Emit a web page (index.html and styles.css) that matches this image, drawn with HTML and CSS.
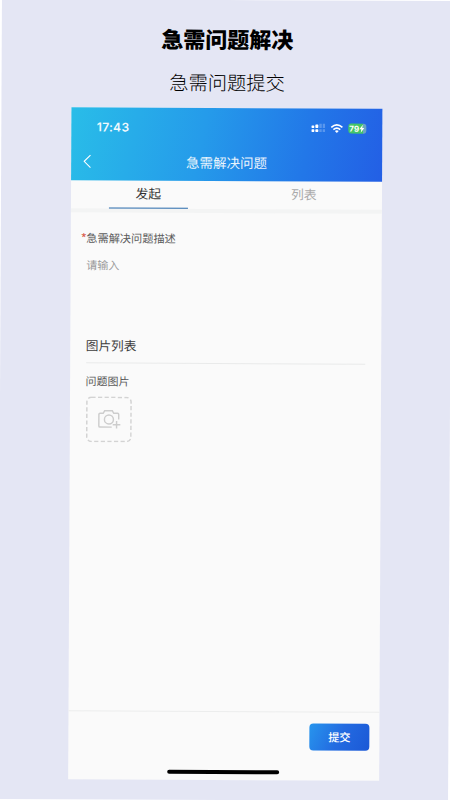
FILE: index.html
```html
<!DOCTYPE html>
<html lang="zh-CN">
<head>
<meta charset="utf-8">
<title>急需问题解决</title>
<link rel="stylesheet" href="styles.css">
</head>
<body>
<main class="poster">
  <h1 class="headline">急需问题解决</h1>
  <p class="subline">急需问题提交</p>
  <section class="phone">
    <header class="top">
      <div class="status">
        <span class="time">17:43</span>
        <div class="status-icons">
          <svg class="signal" viewBox="0 0 14 9" fill="#fff"><rect x="0" y="2" width="3" height="2.5" rx=".7"/><rect x="4" y="1" width="3" height="3.5" rx=".7"/><rect x="0" y="5.8" width="3" height="2.8" rx=".7"/><rect x="4" y="5.8" width="3" height="2.8" rx=".7"/><g opacity=".25"><rect x="8" y="0" width="2.4" height="4.5"/><rect x="11.4" y="0" width="2.4" height="4.5"/><rect x="8" y="5.8" width="2.4" height="2.8"/><rect x="11.4" y="5.8" width="2.4" height="2.8"/></g></svg>
          <svg class="wifi" viewBox="0 0 14 10" fill="none" stroke="#fff" stroke-width="1.8"><path d="M1 3.8Q7-1.5 13 3.8"/><path d="M3.3 6.2Q7 3 10.7 6.2"/><path d="M7 9.8 4.9 7.6Q7 6 9.1 7.6Z" fill="#fff" stroke="none"/></svg>
          <span class="battery">79<svg class="bolt" viewBox="0 0 5 8" fill="#fff"><path d="M3.5 0 0 4.5h2L1.4 8 5 3.3H3z"/></svg></span>
        </div>
      </div>
      <div class="nav">
        <svg class="back" viewBox="0 0 8 14" fill="none" stroke="#fff" stroke-width="1.1"><path d="M7.3.7 1 7l6.3 6.3"/></svg>
        <span class="nav-title">急需解决问题</span>
      </div>
    </header>
    <nav class="tabs">
      <div class="tab active"><span>发起</span></div>
      <div class="tab"><span>列表</span></div>
    </nav>
    <div class="form">
      <div class="label"><span class="required">*</span>急需解决问题描述</div>
      <div class="placeholder">请输入</div>
      <div class="section-title">图片列表</div>
      <div class="label image-label">问题图片</div>
      <div class="upload">
        <svg class="outline" viewBox="0 0 46 46" fill="none" stroke="#d3d3d3" stroke-width="1.5" stroke-dasharray="4.2 2.4"><rect x=".9" y=".9" width="44.2" height="44.2" rx="4.5"/></svg>
        <svg class="camera" viewBox="0 0 24 20" fill="none" stroke="#cdcdcd" stroke-width="1.5"><path d="M14.5 18H2.2Q1 18 1 16.8V4.8Q1 3.6 2.2 3.6H5.5L7 1H15l1.5 2.6h4q1.2 0 1.2 1.2V10"/><circle cx="11.5" cy="10" r="4.7"/><path d="M15.5 15.5h8M19.5 11.5v8"/></svg>
      </div>
    </div>
    <footer class="bottom">
      <button class="submit">提交</button>
      <div class="home"></div>
    </footer>
  </section>
</main>
</body>
</html>
```
FILE: styles.css
```css
* { box-sizing: border-box; }
body {
  margin: 0;
  width: 450px;
  height: 800px;
  overflow: hidden;
  background: #fff;
  font-family: "Noto Sans CJK SC", sans-serif;
}
.poster {
  width: 450px;
  height: 800px;
  padding-top: 22px;
  background: #e4e6f4;
  transform: rotate(.28deg);
}
.headline {
  margin: 0 0 0 1px;
  font-size: 22px;
  line-height: 32px;
  font-weight: 900;
  text-align: center;
  color: #000;
}
.subline {
  margin: 14px 0 11px 1px;
  font-size: 19.3px;
  line-height: 29px;
  font-weight: 300;
  text-align: center;
  color: #000;
}
.phone {
  display: flex;
  flex-direction: column;
  width: 311px;
  height: 672px;
  margin-left: 69.5px;
  background: #fafafa;
}
.top {
  height: 72.5px;
  background: linear-gradient(102deg, #29bde8 0%, #259bea 42%, #2277e8 75%, #235fe5 100%);
  color: #fff;
}
.status {
  display: flex;
  justify-content: space-between;
  align-items: center;
  height: 39.5px;
  padding: 0 16px 0 26px;
}
.time {
  font: 600 12px/16px Inter, sans-serif;
  letter-spacing: .3px;
  opacity: .93;
}
.status-icons { display: flex; align-items: center; gap: 5px; }
.signal { width: 14px; height: 9px; }
.wifi { width: 13px; height: 10px; }
.battery {
  display: flex;
  align-items: center;
  gap: .5px;
  width: 18px;
  height: 10px;
  padding-left: 1.5px;
  border-radius: 3px;
  background: linear-gradient(90deg, #43c568 84%, #6ba5c2 84%);
  font: 700 8px/10px Inter, sans-serif;
}
.bolt { width: 5px; height: 8px; }
.nav {
  display: flex;
  align-items: center;
  height: 29px;
  padding-left: 12.5px;
}
.back { width: 8px; height: 14px; }
.nav-title {
  flex: 1;
  padding-right: 20px;
  text-align: center;
  font-size: 13.5px;
  line-height: 20px;
  opacity: .9;
}
.tabs {
  display: flex;
  height: 32.5px;
  border-bottom: 4.5px solid #f3f4f4;
}
.tab {
  flex: 1;
  display: flex;
  justify-content: center;
  font-size: 12.8px;
  line-height: 26px;
  color: #aaa;
}
.active span {
  width: 79px;
  height: 28px;
  border-bottom: 1.7px solid #286aab;
  text-align: center;
  color: #333;
}
.form { flex: 1; padding: 17px 16px 0 16px; }
.label {
  position: relative;
  font-size: 11.2px;
  line-height: 16px;
  color: #5c5c5c;
}
.required {
  position: absolute;
  left: -5.5px;
  top: 1px;
  font-size: 13px;
  color: #d9604d;
}
.placeholder {
  height: 84px;
  padding-top: 11px;
  font-size: 11.1px;
  line-height: 16px;
  color: #9b9b9b;
}
.section-title {
  height: 34px;
  padding-top: 6px;
  border-bottom: 1px solid #e9eaea;
  font-size: 12.7px;
  line-height: 20px;
  color: #3d3d3d;
}
.image-label { margin-top: 9px; font-size: 11px; }
.upload {
  display: grid;
  place-items: center;
  width: 46px;
  height: 46px;
  margin: 8px 0 0 .5px;
}
.outline, .camera { grid-area: 1 / 1; }
.outline { width: 46px; height: 46px; }
.camera { width: 23px; height: 20px; }
.bottom {
  display: flex;
  flex-direction: column;
  height: 69px;
  padding: 10.5px 9.5px 0;
  border-top: 1px solid #eceded;
}
.submit {
  align-self: flex-end;
  width: 60px;
  height: 27px;
  padding: 0;
  border: 0;
  border-radius: 4px;
  background: linear-gradient(115deg, #2795ed 0%, #236be1 50%, #1b58d6 100%);
  color: #fff;
  font: 500 11.2px/27px "Noto Sans CJK SC", sans-serif;
}
.home {
  align-self: center;
  width: 112px;
  height: 4.4px;
  margin-top: 20.5px;
  border-radius: 3px;
  background: #000;
}
```
